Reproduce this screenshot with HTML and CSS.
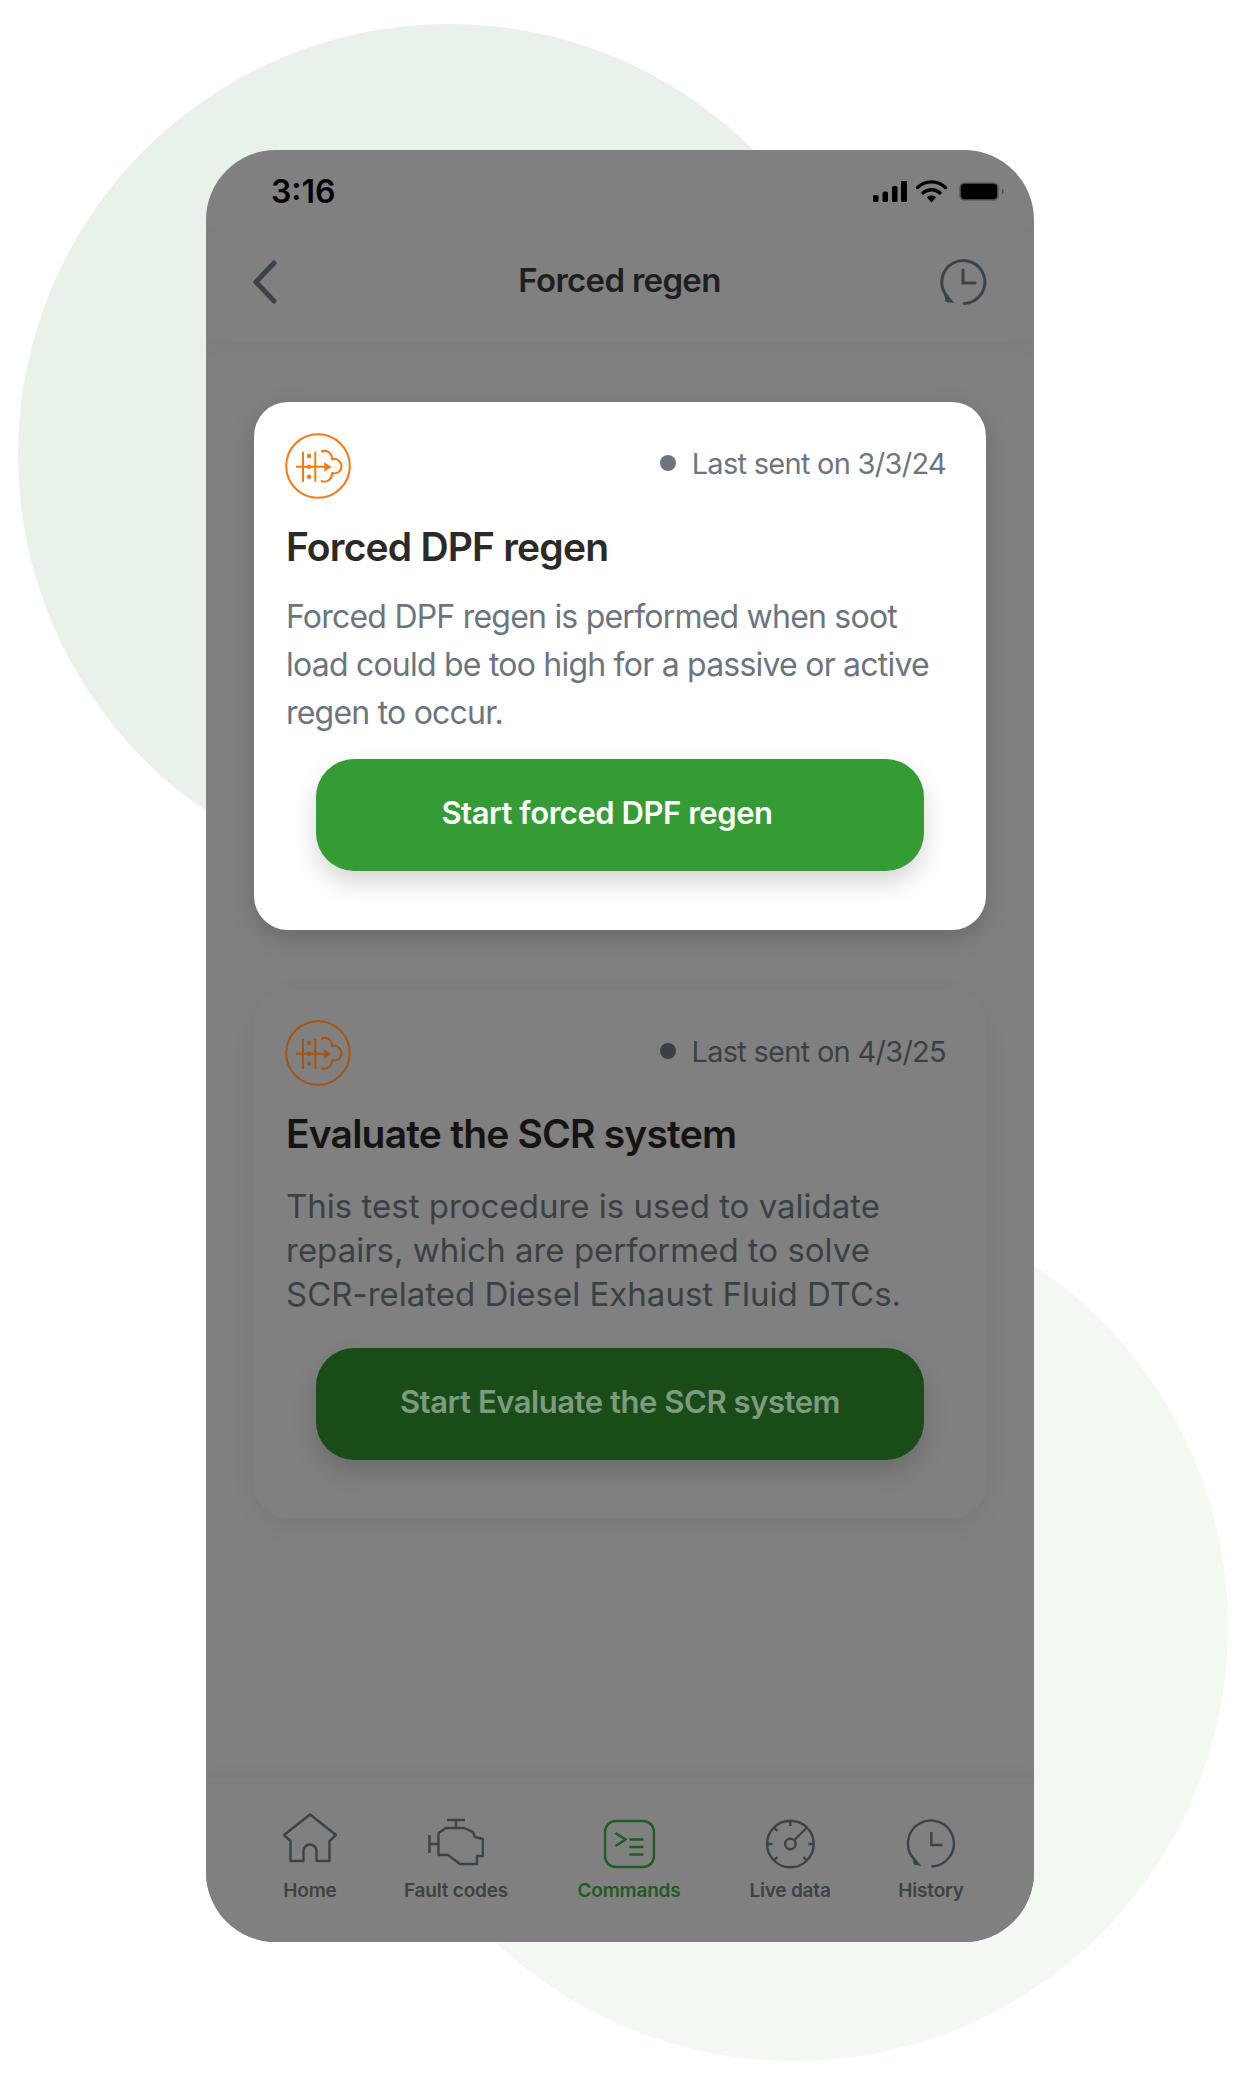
FILE: index.html
```html
<!DOCTYPE html>
<html lang="en">
<head>
    <meta charset="UTF-8" />
    <meta name="viewport" content="width=device-width, initial-scale=1.0" />
    <title>Forced regen</title>
    <link rel="stylesheet" href="styles.css">
</head>
<body>
    <div class="blob blob-top"></div>
    <div class="blob blob-bottom"></div>

    <div class="phone">
        <div class="status-bar">
            <span class="time">3:16</span>
            <div class="status-icons">
                <svg width="34" height="21" viewBox="0 0 34 21"><rect x="0" y="14" width="5.5" height="7" rx="1.5"/><rect x="9.5" y="10.5" width="5.5" height="10.5" rx="1.5"/><rect x="19" y="5" width="5.5" height="16" rx="1.5"/><rect x="28" y="0" width="6" height="21" rx="1.5"/></svg>
                <svg width="31" height="23" viewBox="0 0 31 23"><path d="M1.5 7.5C9.5 0 21.5 0 29.5 7.5" fill="none" stroke="#000" stroke-width="3.4" stroke-linecap="round"/><path d="M7 13C12 8.6 19 8.6 24 13" fill="none" stroke="#000" stroke-width="3.4" stroke-linecap="round"/><path d="M10.8 17.2C13.5 14.8 17.5 14.8 20.2 17.2L15.5 22.5Z"/></svg>
                <svg class="battery" width="47" height="19" viewBox="0 0 47 19"><rect x="1" y="1" width="38" height="17" rx="4.5" fill="#000" stroke="#5c5c5c" stroke-width="1.6"/><path d="M43 6.5C45.5 7.5 45.5 11.5 43 12.5Z" fill="#555"/></svg>
            </div>
        </div>

        <div class="top-bar">
            <svg class="back" width="26" height="44" viewBox="0 0 26 44"><path d="M22 3L4 22L22 41" fill="none" stroke="#3b4248" stroke-width="5" stroke-linecap="round" stroke-linejoin="round"/></svg>
            <h1>Forced regen</h1>
            <svg class="history-top" width="48" height="48" viewBox="0 0 48 48" fill="none" stroke="#3b4248" stroke-width="3" stroke-linecap="round"><path d="M25 45.5A21.5 21.5 0 1 0 8 38"/><path d="M24 12V25H36"/><path d="M4.5 32.5L15.5 45L6.5 44Z" fill="#3b4248" stroke="none"/></svg>
        </div>

        <div class="content">
            <div class="card card-active">
                <div class="card-head">
                    <svg class="regen" width="66" height="66" viewBox="0 0 66 66" fill="none" stroke="#f47a14" stroke-width="2"><circle cx="33" cy="33" r="31.8"/><path d="M11 33.7H40M18 18.7V48.7M30.3 18.7V48.7"/><path d="M36 18.7C41 16.5 47 19 47 26.3C52 24.5 56.5 29 56.5 33.5C56.5 38 52 41.5 47 40C47.5 45 43 50.5 36 48" stroke-linejoin="round"/><circle cx="24" cy="23" r="2.2" fill="#f47a14" stroke="none"/><circle cx="24" cy="33.7" r="2.2" fill="#f47a14" stroke="none"/><circle cx="24" cy="43.7" r="2.2" fill="#f47a14" stroke="none"/><path d="M39.3 29.3L46.5 34L39.3 38.7Z" fill="#f47a14" stroke="none"/></svg>
                    <div class="sent"><span class="dot"></span>Last sent on 3/3/24</div>
                </div>
                <h2>Forced DPF regen</h2>
                <p>Forced DPF regen is performed when soot load could be too high for a passive or active regen to occur.</p>
                <button class="start">Start forced DPF regen</button>
            </div>

            <div class="card card-dim">
                <div class="card-head">
                    <svg class="regen" width="66" height="66" viewBox="0 0 66 66" fill="none" stroke="#a85410" stroke-width="2"><circle cx="33" cy="33" r="31.8"/><path d="M11 33.7H40M18 18.7V48.7M30.3 18.7V48.7"/><path d="M36 18.7C41 16.5 47 19 47 26.3C52 24.5 56.5 29 56.5 33.5C56.5 38 52 41.5 47 40C47.5 45 43 50.5 36 48" stroke-linejoin="round"/><circle cx="24" cy="23" r="2.2" fill="#a85410" stroke="none"/><circle cx="24" cy="33.7" r="2.2" fill="#a85410" stroke="none"/><circle cx="24" cy="43.7" r="2.2" fill="#a85410" stroke="none"/><path d="M39.3 29.3L46.5 34L39.3 38.7Z" fill="#a85410" stroke="none"/></svg>
                    <div class="sent"><span class="dot"></span>Last sent on 4/3/25</div>
                </div>
                <h2>Evaluate the SCR system</h2>
                <p>This test procedure is used to validate repairs, which are performed to solve SCR-related Diesel Exhaust Fluid DTCs.</p>
                <button class="start">Start Evaluate the SCR system</button>
            </div>
        </div>

        <div class="tab-bar">
            <div class="tab tab-home">
                <svg width="54" height="50" viewBox="0 0 54 50" fill="none" stroke="#3b4248" stroke-width="2.4" stroke-linejoin="round"><path d="M27 1.5L53 22L46.5 28V48H33.5V38A6.5 6.5 0 0 0 20.5 38V48H7.5V28L1 22Z"/></svg>
                <span>Home</span>
            </div>
            <div class="tab tab-fault">
                <svg width="56" height="50" viewBox="0 0 56 50" fill="none" stroke="#3b4248" stroke-width="2.4" stroke-linejoin="round"><path d="M19 2H37M28 2V10M1.5 17V35M1.5 26H10.5M10.5 36V15L18 10H36L45 14L47 19L55 21V38H49V46H32L20 37H10.5Z"/></svg>
                <span>Fault codes</span>
            </div>
            <div class="tab tab-commands">
                <svg width="52" height="50" viewBox="0 0 52 50" fill="none" stroke="#1f5c22" stroke-width="2.4"><rect x="1.5" y="2" width="49" height="46" rx="11"/><path d="M12 14L22 20.5L12 27M26 20.5H40M26 28H40M26 35.5H40"/></svg>
                <span>Commands</span>
            </div>
            <div class="tab tab-live">
                <svg width="50" height="50" viewBox="0 0 50 50" fill="none" stroke="#3b4248" stroke-width="2.4"><circle cx="25" cy="25" r="23.3"/><circle cx="25" cy="25" r="5.3"/><path d="M29 21L41.5 8.5M25 2V7M2 25H7M43 25H48M9 9L12 12M41 41L38 38M9 41L12 38"/></svg>
                <span>Live data</span>
            </div>
            <div class="tab tab-history">
                <svg width="50" height="50" viewBox="0 0 50 50" fill="none" stroke="#3b4248" stroke-width="2.4"><path d="M25 47.5A23 23 0 1 0 8.5 41"/><path d="M25 13V26H36"/><path d="M6 36L15 47L7.5 45.5Z" fill="#3b4248" stroke="none"/></svg>
                <span>History</span>
            </div>
        </div>
    </div>
</body>
</html>
```

FILE: styles.css
```css
* { box-sizing: border-box; }

html, body {
    margin: 0;
    height: 2090px;
    overflow: hidden;
    background: #fff;
    font-family: Inter, "Noto Sans", sans-serif;
}

.blob {
    position: absolute;
    border-radius: 50%;
}
.blob-top { left: 18px; top: 24px; width: 862px; height: 862px; background: #e9f2ea; }
.blob-bottom { left: 360px; top: 1193px; width: 868px; height: 868px; background: #f3f8f2; }

.phone {
    position: relative;
    display: flex;
    flex-direction: column;
    width: 828px;
    height: 1792px;
    margin: 150px 0 0 206px;
    border-radius: 70px;
    background: #808080;
    overflow: hidden;
}

.status-bar {
    display: flex;
    justify-content: space-between;
    align-items: center;
    height: 82px;
    padding: 0 28px 0 65px;
}
.time {
    font-size: 32px;
    font-weight: 600;
    color: #000;
}
.status-icons { display: flex; align-items: center; gap: 9px; }
.battery { margin-left: 3px; }

.top-bar {
    display: flex;
    align-items: center;
    height: 109px;
    padding: 2px 47px 12px 46px;
    box-shadow: 0 6px 20px rgba(0,0,0,0.03);
}
.top-bar h1 {
    flex: 1;
    margin: 0 0 4px;
    padding-left: 22px;
    text-align: center;
    font-size: 33px;
    font-weight: 600;
    letter-spacing: -0.7px;
    color: #1f1f1f;
}

.content {
    flex: 1;
    display: flex;
    flex-direction: column;
    gap: 59px;
    padding: 61px 48px 0;
}

.card {
    height: 528px;
    padding: 31px 32px 0;
    border-radius: 34px;
}
.card-active {
    background: #fff;
    box-shadow: 0 8px 24px rgba(0,0,0,0.18);
}
.card-dim {
    height: 529px;
    background: #808080;
    box-shadow: 0 8px 24px rgba(0,0,0,0.06);
}

.card-head {
    display: flex;
    justify-content: space-between;
    align-items: center;
    margin-left: -1px;
}
.sent {
    display: flex;
    align-items: center;
    gap: 16px;
    margin-right: 8px;
    padding-bottom: 6px;
    font-size: 29px;
    letter-spacing: -0.72px;
    color: #6b7580;
}
.dot {
    width: 16px;
    height: 16px;
    border-radius: 50%;
    background: #6b7580;
}

.card h2 {
    margin: 21px 0 0;
    font-size: 39px;
    font-weight: 600;
    letter-spacing: -0.8px;
    line-height: 54px;
    color: #2d2926;
}
.card p {
    margin: 19px 0 0;
    font-size: 32px;
    letter-spacing: -0.78px;
    line-height: 48px;
    color: #6b7580;
}
.card-dim .sent { padding-bottom: 4px; color: #3b4045; }
.card-dim .dot { background: #3b4045; }
.card-dim h2 { color: #161412; }
.card-dim p {
    margin-top: 23px;
    font-size: 33px;
    line-height: 44px;
    letter-spacing: 0;
    color: #3b4045;
}

.start {
    display: block;
    width: 608px;
    height: 112px;
    margin: 22px 0 0 30px;
    padding: 0 0 6px;
    border: none;
    border-radius: 38px;
    background: #359b35;
    box-shadow: 0 12px 24px rgba(0,0,0,0.16);
    font-family: inherit;
    font-size: 31px;
    font-weight: 600;
    letter-spacing: -0.45px;
    color: #fff;
}
.card-active .start { padding-right: 26px; }
.card-dim .start {
    margin-top: 32px;
    background: #184d18;
    color: #7f9b7f;
}

.tab-bar {
    position: relative;
    height: 164px;
    background: #808080;
    box-shadow: 0 -4px 14px rgba(0,0,0,0.035);
}
.tab {
    position: absolute;
    top: 41px;
    display: flex;
    flex-direction: column;
    align-items: center;
    gap: 10px;
    transform: translateX(-50%);
    font-size: 19px;
    font-weight: 600;
    letter-spacing: -0.2px;
    color: #3b4248;
    white-space: nowrap;
}
.tab-home { left: 104px; }
.tab-home svg { margin: -6px 0 6px; }
.tab-fault { left: 250px; }
.tab-fault svg { margin: -1px 0 1px; }
.tab-commands { left: 423px; color: #1f5c22; }
.tab-live { left: 584px; }
.tab-history { left: 725px; }
```
